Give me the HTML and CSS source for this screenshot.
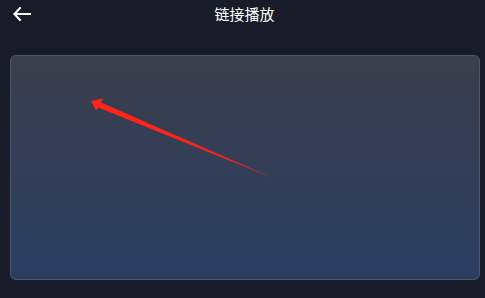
FILE: index.html
```html
<!DOCTYPE html>
<html lang="zh-CN">
<head>
    <meta charset="UTF-8">
    <meta name="viewport" content="width=device-width, initial-scale=1.0">
    <title>链接播放</title>
    <link rel="stylesheet" href="styles.css">
</head>
<body>
    <header class="top-bar">
        <button class="back-btn" aria-label="返回">
            <svg width="18" height="14" viewBox="0 0 18 14">
                <path d="M7 1 L1.5 7 L7 13 M1.5 7 H17.5" fill="none" stroke="#fff" stroke-width="2" stroke-linecap="square"/>
            </svg>
        </button>
        <h1 class="title">链接播放</h1>
    </header>

    <main class="player-box">
        <svg class="annotation" width="470" height="225" viewBox="0 0 470 225">
            <polygon points="81,46 93.5,43.5 90.6,47.2 264,123.5 88.2,52.4 86,55.5" fill="#ff2418"/>
        </svg>
    </main>
</body>
</html>
```

FILE: styles.css
```css
:root {
    --bg-color: #191b29;
    --text-color: #ffffff;
}

* {
    margin: 0;
    padding: 0;
    box-sizing: border-box;
}

body {
    font-family: "Noto Sans CJK SC", "Noto Sans", sans-serif;
    background-color: var(--bg-color);
    color: var(--text-color);
    width: 485px;
    height: 298px;
    overflow: hidden;
}

.top-bar {
    position: relative;
    height: 28px;
    display: flex;
    align-items: center;
    justify-content: center;
}

.back-btn {
    position: absolute;
    left: 13px;
    top: 7px;
    background: none;
    border: none;
    display: flex;
}

.title {
    font-size: 15px;
    font-weight: 400;
    line-height: 28px;
    margin-left: 4px;
}

.player-box {
    position: relative;
    margin: 27px 5px 0 10px;
    height: 225px;
    border-radius: 6px;
    border: 1px solid rgba(255, 255, 255, 0.12);
    background: linear-gradient(180deg, #3b3e4c 0%, #2b3e62 100%);
}

.annotation {
    position: absolute;
    top: -1px;
    left: -1px;
}
```
